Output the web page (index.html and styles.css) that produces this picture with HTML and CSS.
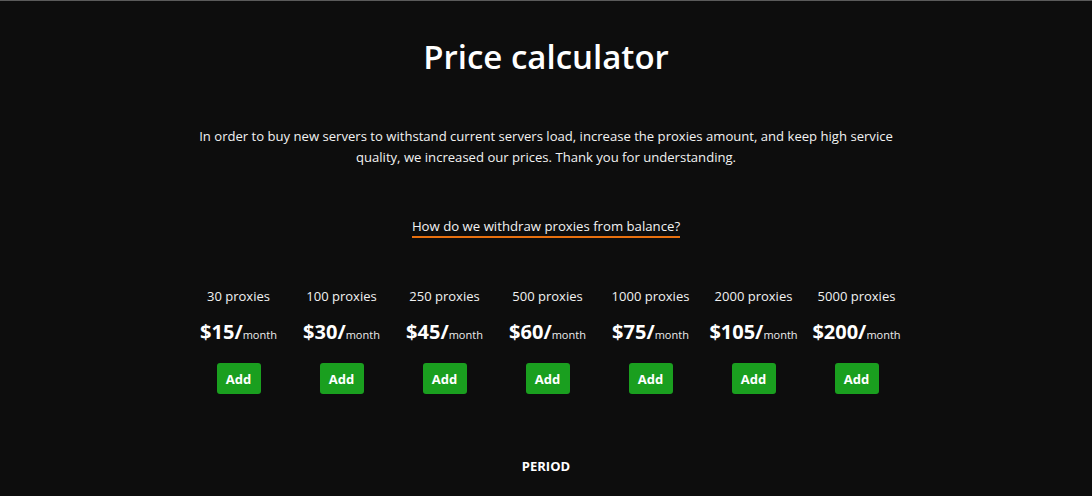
FILE: index.html
```html
<!DOCTYPE html>
<html>
<head>
<meta charset="utf-8">
<link rel="stylesheet" href="styles.css">
</head>
<body>
<main class="calc">
  <h1 class="title">Price calculator</h1>
  <p class="note">In order to buy new servers to withstand current servers load, increase the proxies amount, and keep high service quality, we increased our prices. Thank you for understanding.</p>
  <div class="link-row"><a class="link" href="#">How do we withdraw proxies from balance?</a></div>
  <div class="plans">
    <div class="plan"><div class="count">30 proxies</div><div class="price"><b>$15/</b><span>month</span></div><button class="add">Add</button></div>
    <div class="plan"><div class="count">100 proxies</div><div class="price"><b>$30/</b><span>month</span></div><button class="add">Add</button></div>
    <div class="plan"><div class="count">250 proxies</div><div class="price"><b>$45/</b><span>month</span></div><button class="add">Add</button></div>
    <div class="plan"><div class="count">500 proxies</div><div class="price"><b>$60/</b><span>month</span></div><button class="add">Add</button></div>
    <div class="plan"><div class="count">1000 proxies</div><div class="price"><b>$75/</b><span>month</span></div><button class="add">Add</button></div>
    <div class="plan"><div class="count">2000 proxies</div><div class="price"><b>$105/</b><span>month</span></div><button class="add">Add</button></div>
    <div class="plan"><div class="count">5000 proxies</div><div class="price"><b>$200/</b><span>month</span></div><button class="add">Add</button></div>
  </div>
  <div class="period">PERIOD</div>
</main>
</body>
</html>
```
FILE: styles.css
```css
html, body { margin: 0; padding: 0; }
body {
  background: #0d0d0d;
  color: #fff;
  font-family: "Open Sans", "Noto Sans", sans-serif;
  border-top: 1px solid #5a5a5a;
  height: 495px;
  overflow: hidden;
}
.calc {
  display: flex;
  flex-direction: column;
  align-items: center;
  padding-top: 34px;
}
.title {
  margin: 0;
  font-size: 33px;
  font-weight: 600;
  line-height: 44px;
}
.note {
  margin: 47px 0 0;
  width: 720px;
  text-align: center;
  font-size: 13.1px;
  line-height: 21px;
  color: #f2f2f2;
}
.link-row { margin-top: 46px; }
.link {
  color: #f2f2f2;
  text-decoration: none;
  font-size: 13.2px;
  line-height: 20px;
  border-bottom: 2px solid #e8700f;
  padding-bottom: 1px;
}
.plans {
  margin-top: 50px;
  margin-left: 3px;
  display: flex;
  justify-content: center;
}
.plan {
  width: 103px;
  display: flex;
  flex-direction: column;
  align-items: center;
}
.count {
  font-size: 13px;
  line-height: 20px;
  color: #f2f2f2;
}
.price {
  margin-top: 12px;
  display: flex;
  align-items: baseline;
  line-height: 28px;
}
.price b { font-size: 20px; font-weight: 700; }
.price span { font-size: 11px; color: #eee; }
.add {
  margin-top: 14px;
  width: 44px;
  height: 31px;
  border: none;
  border-radius: 3px;
  background: #1a9f1f;
  color: #fff;
  font-family: inherit;
  font-size: 13px;
  font-weight: 700;
  padding: 0;
}
.period {
  margin-top: 63px;
  font-size: 13px;
  font-weight: 700;
}
```
